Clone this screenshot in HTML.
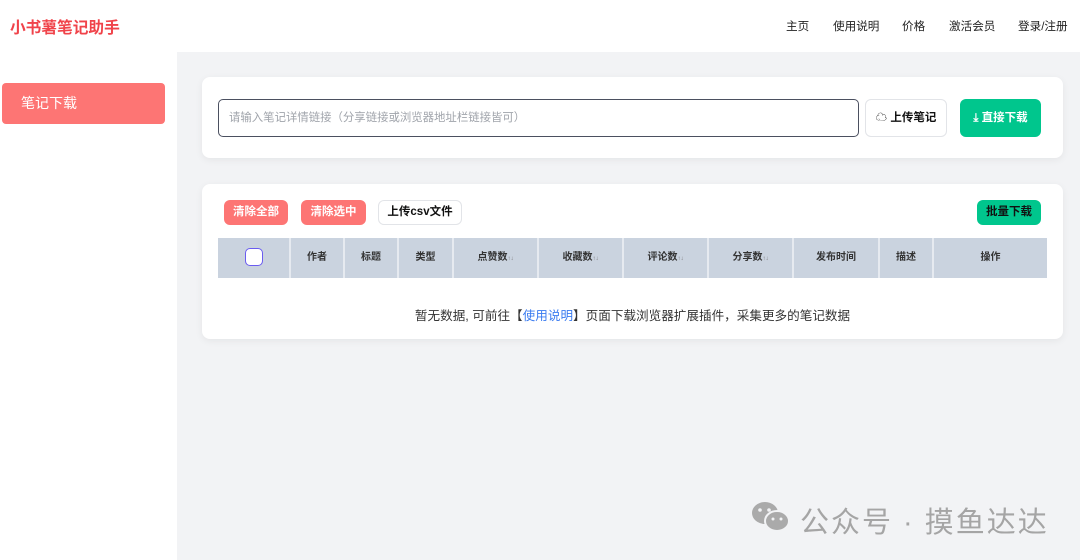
<!DOCTYPE html><html><head><meta charset="utf-8"><style>
*{margin:0;padding:0;box-sizing:border-box}
body{width:1080px;height:560px;overflow:hidden;background:#f2f3f5;font-family:"Liberation Sans","Noto Sans CJK SC",sans-serif;position:relative}
.hd{position:absolute;left:0;top:0;width:1080px;height:52px;background:#fff}
.logo{position:absolute;left:10px;top:15px;font-size:15.7px;font-weight:bold;color:#f0434a}
.nav{position:absolute;top:18px;font-size:11.6px;color:#222}
.sb{position:absolute;left:0;top:52px;width:177px;height:508px;background:#fff}
.act{position:absolute;left:2px;top:83px;width:163px;height:41px;background:#fd7574;border-radius:4px;color:#fff;font-size:14px;line-height:41px;padding-left:19px}
.card{position:absolute;background:#fff;border-radius:8px;box-shadow:0 2px 8px rgba(0,0,0,.06)}
.inp{position:absolute;left:218px;top:99px;width:641px;height:38px;border:1px solid #4b5060;border-radius:5px;font-size:11.4px;color:#a0a4ab;line-height:36px;padding-left:10px}
.btn{position:absolute;font-size:11.5px;font-weight:bold;text-align:center;border-radius:6px}
.th{position:absolute;top:238px;height:40px;background:#cad3df;font-size:10px;font-weight:bold;color:#333;text-align:center;line-height:40px;border-right:2px solid #e6eaf0}
.s{font-size:6px;color:#777}
</style></head><body>
<div class="hd"></div>
<div class="logo">小书薯笔记助手</div>
<div class="nav" style="left:786px">主页</div>
<div class="nav" style="left:833px">使用说明</div>
<div class="nav" style="left:902px">价格</div>
<div class="nav" style="left:949px">激活会员</div>
<div class="nav" style="left:1018px">登录/注册</div>
<div class="sb"></div>
<div class="act">笔记下载</div>
<div class="card" style="left:202px;top:77px;width:861px;height:81px"></div>
<div class="inp">请输入笔记详情链接（分享链接或浏览器地址栏链接皆可）</div>
<div class="btn" style="left:865px;top:99px;width:82px;height:38px;border:1px solid #e2e4e8;line-height:36px;color:#111">☁ 上传笔记</div>
<div class="btn" style="left:960px;top:99px;width:81px;height:38px;background:#00c68d;color:#fff;line-height:38px">⤓ 直接下载</div>
<div class="card" style="left:202px;top:184px;width:861px;height:155px"></div>
<div class="btn" style="left:224px;top:200px;width:64px;height:25px;background:#fd7574;color:#fff;line-height:25px">清除全部</div>
<div class="btn" style="left:301px;top:200px;width:65px;height:25px;background:#fd7574;color:#fff;line-height:25px">清除选中</div>
<div class="btn" style="left:378px;top:200px;width:84px;height:25px;border:1px solid #e2e4e8;color:#111;line-height:23px">上传csv文件</div>
<div class="btn" style="left:977px;top:200px;width:64px;height:25px;background:#00c68d;color:#111;line-height:25px">批量下载</div>
<div class="th" style="left:218px;width:73px"><span style="display:inline-block;width:18px;height:18px;border:1px solid #6a5cf0;border-radius:5px;background:#fff;vertical-align:middle"></span></div>
<div class="th" style="left:291px;width:54px">作者</div>
<div class="th" style="left:345px;width:54px">标题</div>
<div class="th" style="left:399px;width:55px">类型</div>
<div class="th" style="left:454px;width:85px">点赞数<span class="s">↑↓</span></div>
<div class="th" style="left:539px;width:85px">收藏数<span class="s">↑↓</span></div>
<div class="th" style="left:624px;width:85px">评论数<span class="s">↑↓</span></div>
<div class="th" style="left:709px;width:85px">分享数<span class="s">↑↓</span></div>
<div class="th" style="left:794px;width:86px">发布时间</div>
<div class="th" style="left:880px;width:54px">描述</div>
<div class="th" style="left:934px;width:113px;border-right:0">操作</div>
<div style="position:absolute;left:202px;width:861px;top:305px;text-align:center;font-size:12.6px;color:#333">暂无数据, 可前往【<span style="color:#3a7bf0">使用说明</span>】页面下载浏览器扩展插件，采集更多的笔记数据</div>
<svg style="position:absolute;left:750px;top:500px" width="42" height="34" viewBox="0 0 42 34"><ellipse cx="15" cy="13" rx="13" ry="11" fill="#aaa"/><ellipse cx="27" cy="21" rx="12" ry="10" fill="#aaa" stroke="#f2f3f5" stroke-width="2"/><circle cx="10" cy="10" r="1.8" fill="#f2f3f5"/><circle cx="19" cy="10" r="1.8" fill="#f2f3f5"/><circle cx="23" cy="19" r="1.5" fill="#f2f3f5"/><circle cx="31" cy="19" r="1.5" fill="#f2f3f5"/></svg>
<div style="position:absolute;left:800px;top:499px;font-size:29px;color:#a5a5a5;letter-spacing:2px">公众号 · 摸鱼达达</div>
</body></html>
